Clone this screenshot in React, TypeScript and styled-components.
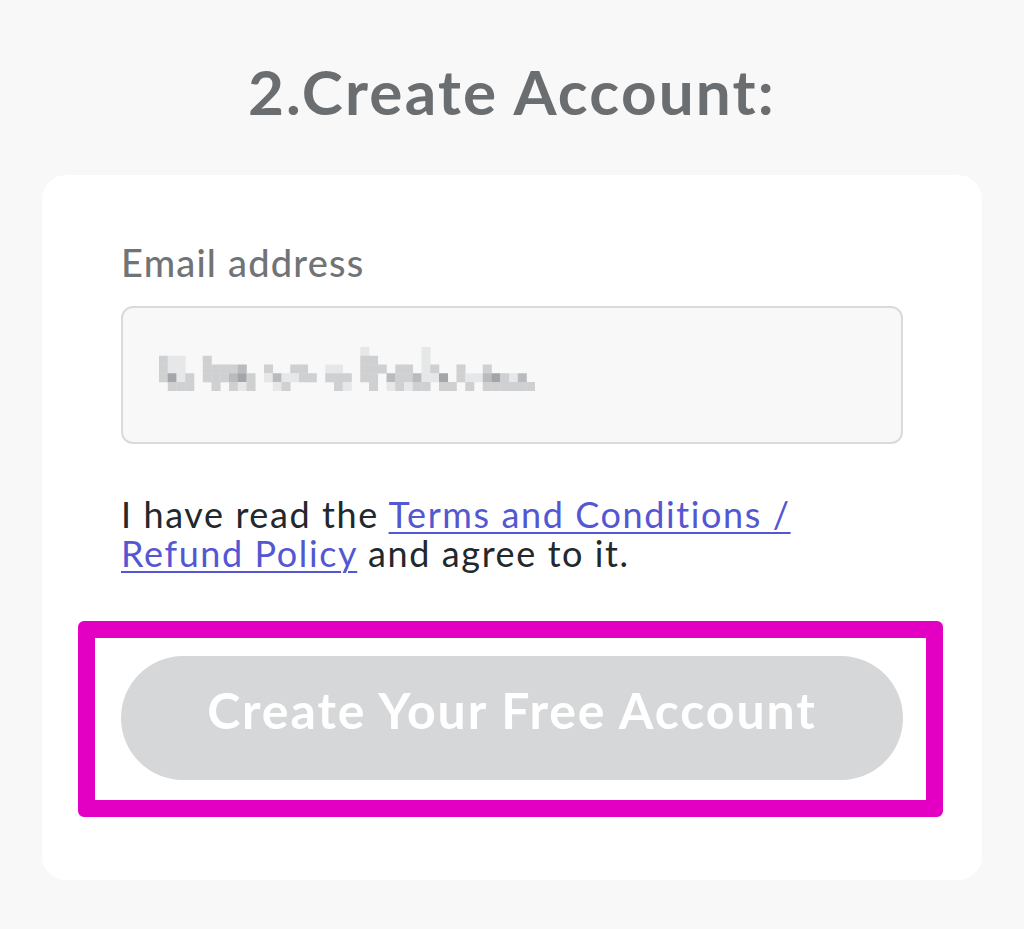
import { createGlobalStyle, styled } from 'styled-components';

const GlobalStyle = createGlobalStyle`
  html, body {
    margin: 0;
    padding: 0;
    background: #f8f8f8;
  }
  body {
    font-family: Lato, "Noto Sans", sans-serif;
  }
`;

const Page = styled.div`
  min-height: 929px;
  padding-top: 54px;
  box-sizing: border-box;
`;

const Heading = styled.h1`
  margin: 0 0 47px;
  text-align: center;
  font-size: 62px;
  line-height: 1.2;
  font-weight: 700;
  color: #6b6e71;
  letter-spacing: 2.2px;
`;

const Card = styled.div`
  margin: 0 42px;
  background: #ffffff;
  border-radius: 24px;
  padding: 65px 79px 100px;
  display: flex;
  flex-direction: column;
`;

const Label = styled.label`
  font-size: 38px;
  line-height: 1.2;
  font-weight: 500;
  color: #717477;
  letter-spacing: 1.2px;
`;

const InputBox = styled.div`
  margin-top: 20px;
  height: 138px;
  box-sizing: border-box;
  border: 2px solid #dadada;
  border-radius: 12px;
  background: #f8f8f8;
  display: flex;
  align-items: center;
  padding: 0 0 12px 36px;
`;

const Terms = styled.p`
  margin: 51px 0 0;
  font-size: 36px;
  line-height: 39px;
  color: #22282b;
  letter-spacing: 1.6px;
`;

const TermsLink = styled.a`
  color: #5457d2;
  text-decoration: underline;
  text-decoration-thickness: 2px;
  text-underline-offset: 4px;
`;

const Highlight = styled.div`
  position: relative;
  margin-top: 83px;

  &::after {
    content: '';
    position: absolute;
    top: -35px;
    left: -43px;
    right: -40px;
    bottom: -37px;
    border: 17px solid #e300c3;
    border-radius: 6px;
    pointer-events: none;
  }
`;

const SubmitButton = styled.button`
  width: 100%;
  height: 124px;
  border: none;
  border-radius: 62px;
  background: #d6d7d9;
  color: #ffffff;
  font-family: Lato, "Noto Sans", sans-serif;
  font-size: 50px;
  font-weight: 700;
  letter-spacing: 1.9px;
  padding: 0 0 16px;
  display: flex;
  align-items: center;
  justify-content: center;
`;

// pixelated (blurred-out) email value
const MOSAIC = [
  '.......................a......a............',
  'baa..b.................bb.....a............',
  'baa..bbbbc..b..bb..aa..bbb.bb.ab..b..b.....',
  'bdab.bbbcd' + 'b.acaabb.b' + 'bb.bb.cbbc' + 'aad.baacdb' + 'ac.',
  '.bbb..b.ba' + 'b..ab.....' + 'ba..b.abab' + 'b.bb.b.bbb' + 'bbb',
];

const SHADES: Record<string, string> = {
  a: '#e6e7e8',
  b: '#cfd0d2',
  c: '#b9bbbe',
  d: '#a2a5a9',
};

const CELL = 8.75;

function Mosaic() {
  return (
    <svg width={43 * CELL} height={5 * CELL} viewBox={`0 0 ${43 * CELL} ${5 * CELL}`}>
      {MOSAIC.map((row, r) =>
        row.split('').map((ch, c) =>
          SHADES[ch] ? (
            <rect key={`${r}-${c}`} x={c * CELL} y={r * CELL} width={CELL + 0.3} height={CELL + 0.3} fill={SHADES[ch]} />
          ) : null
        )
      )}
    </svg>
  );
}

function App() {
  return (
    <Page>
      <GlobalStyle />
      <Heading>2.Create Account:</Heading>
      <Card>
        <Label>Email address</Label>
        <InputBox>
          <Mosaic />
        </InputBox>
        <Terms>
          I have read the <TermsLink href="#">Terms and Conditions / Refund Policy</TermsLink> and agree to it.
        </Terms>
        <Highlight>
          <SubmitButton disabled>Create Your Free Account</SubmitButton>
        </Highlight>
      </Card>
    </Page>
  );
}

export default App;
